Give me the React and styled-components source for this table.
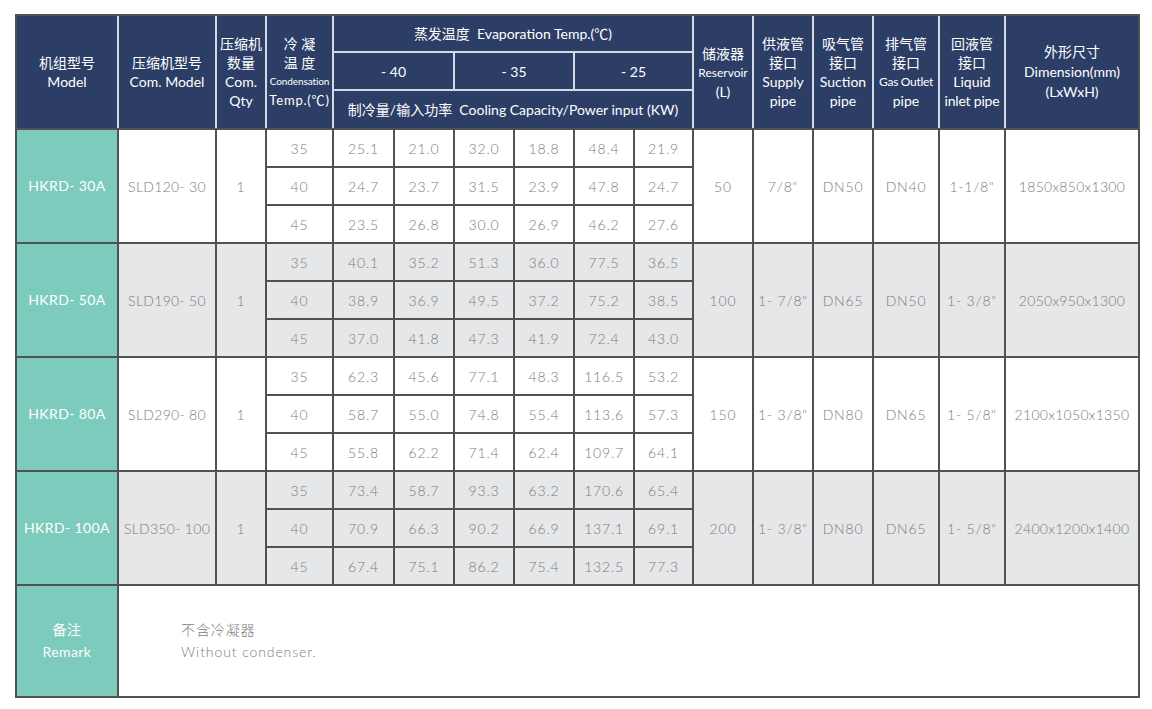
import React from "react";
import styled, { createGlobalStyle } from "styled-components";

const GlobalStyle = createGlobalStyle`
  html, body { margin: 0; padding: 0; background: #ffffff; }
  body { font-family: Lato, "Noto Sans CJK SC", sans-serif; }
  #root { padding: 14px 0 0 15px; }
`;

const COLS = "100px 96px 48px 65px 59px 58px 58px 58px 58px 57px 58px 58px 58px 64px 64px 132px";

const Frame = styled.div`
  display: inline-flex;
  flex-direction: column;
  gap: 2px;
  padding: 2px;
  background: #515151;
`;

const HeadGrid = styled.div`
  display: grid;
  grid-template-columns: ${COLS};
  grid-template-rows: 35px 36px 37px;
  gap: 2px;
  background: #d3d9e2;
`;

const BodyGrid = styled.div`
  display: grid;
  grid-template-columns: ${COLS};
  grid-template-rows: repeat(12, 36px) 110px;
  gap: 2px;
  background: #515151;
`;

const BaseCell = styled.div`
  grid-row: ${(p) => (p.$rows ? `span ${p.$rows}` : "auto")};
  grid-column: ${(p) => (p.$cols ? `span ${p.$cols}` : "auto")};
  display: flex;
  flex-direction: column;
  align-items: center;
  justify-content: center;
  text-align: center;
  font-family: Lato, "Noto Sans CJK SC", sans-serif;
  white-space: nowrap;
`;

const HeadCell = styled(BaseCell)`
  background: #2c3e66;
  color: #ffffff;
  font-size: 14px;
  line-height: 19px;
  font-weight: 400;
`;

const HeadLine = styled.span`
  display: block;
  font-size: ${(p) => p.$size || "14px"};
  letter-spacing: ${(p) => p.$spacing || "0"};
  line-height: ${(p) => p.$lh || "19px"};
`;

const ModelCell = styled(BaseCell)`
  background: #7dcbbc;
  color: #ffffff;
  font-size: 14px;
  line-height: 22px;
  letter-spacing: 0.4px;
`;

const DataCell = styled(BaseCell)`
  background: ${(p) => (p.$shade ? "#e6e7e9" : "#ffffff")};
  color: #7c7c7c;
  font-size: 14px;
  font-weight: 300;
  letter-spacing: ${(p) => (p.$tight ? "0.3px" : "0.8px")};
`;

const RemarkCell = styled(BaseCell)`
  background: #ffffff;
  align-items: flex-start;
  padding-left: 62px;
  color: #7c7c7c;
  font-size: 14px;
  font-weight: 300;
  line-height: 22px;
  letter-spacing: 0.9px;
  text-align: left;
`;

const groups = [
  {
    model: "HKRD- 30A",
    comp: "SLD120- 30",
    qty: "1",
    rows: [
      ["35", "25.1", "21.0", "32.0", "18.8", "48.4", "21.9"],
      ["40", "24.7", "23.7", "31.5", "23.9", "47.8", "24.7"],
      ["45", "23.5", "26.8", "30.0", "26.9", "46.2", "27.6"],
    ],
    res: "50",
    supply: "7/8\"",
    suction: "DN50",
    gas: "DN40",
    liquid: "1-1/8\"",
    dim: "1850x850x1300",
  },
  {
    model: "HKRD- 50A",
    comp: "SLD190- 50",
    qty: "1",
    rows: [
      ["35", "40.1", "35.2", "51.3", "36.0", "77.5", "36.5"],
      ["40", "38.9", "36.9", "49.5", "37.2", "75.2", "38.5"],
      ["45", "37.0", "41.8", "47.3", "41.9", "72.4", "43.0"],
    ],
    res: "100",
    supply: "1- 7/8\"",
    suction: "DN65",
    gas: "DN50",
    liquid: "1- 3/8\"",
    dim: "2050x950x1300",
  },
  {
    model: "HKRD- 80A",
    comp: "SLD290- 80",
    qty: "1",
    rows: [
      ["35", "62.3", "45.6", "77.1", "48.3", "116.5", "53.2"],
      ["40", "58.7", "55.0", "74.8", "55.4", "113.6", "57.3"],
      ["45", "55.8", "62.2", "71.4", "62.4", "109.7", "64.1"],
    ],
    res: "150",
    supply: "1- 3/8\"",
    suction: "DN80",
    gas: "DN65",
    liquid: "1- 5/8\"",
    dim: "2100x1050x1350",
  },
  {
    model: "HKRD- 100A",
    comp: "SLD350- 100",
    qty: "1",
    rows: [
      ["35", "73.4", "58.7", "93.3", "63.2", "170.6", "65.4"],
      ["40", "70.9", "66.3", "90.2", "66.9", "137.1", "69.1"],
      ["45", "67.4", "75.1", "86.2", "75.4", "132.5", "77.3"],
    ],
    res: "200",
    supply: "1- 3/8\"",
    suction: "DN80",
    gas: "DN65",
    liquid: "1- 5/8\"",
    dim: "2400x1200x1400",
  },
];

function Group({ g, shade }) {
  const cells = [];
  g.rows.forEach((row, ri) => {
    if (ri === 0) {
      cells.push(<ModelCell key="m" $rows={3}>{g.model}</ModelCell>);
      cells.push(<DataCell key="c" $rows={3} $shade={shade} $tight>{g.comp}</DataCell>);
      cells.push(<DataCell key="q" $rows={3} $shade={shade}>{g.qty}</DataCell>);
    }
    row.forEach((v, ci) => {
      cells.push(
        <DataCell key={`r${ri}c${ci}`} $shade={shade}>
          {v}
        </DataCell>
      );
    });
    if (ri === 0) {
      [g.res, g.supply, g.suction, g.gas, g.liquid, g.dim].forEach((v, i) => {
        cells.push(
          <DataCell key={`s${i}`} $rows={3} $shade={shade} $tight={i === 5}>
            {v}
          </DataCell>
        );
      });
    }
  });
  return <>{cells}</>;
}

export default function App() {
  return (
    <>
      <GlobalStyle />
      <Frame>
        <HeadGrid>
          <HeadCell $rows={3}>
            <HeadLine>机组型号</HeadLine>
            <HeadLine>Model</HeadLine>
          </HeadCell>
          <HeadCell $rows={3}>
            <HeadLine>压缩机型号</HeadLine>
            <HeadLine>Com. Model</HeadLine>
          </HeadCell>
          <HeadCell $rows={3}>
            <HeadLine>压缩机</HeadLine>
            <HeadLine>数量</HeadLine>
            <HeadLine>Com.</HeadLine>
            <HeadLine>Qty</HeadLine>
          </HeadCell>
          <HeadCell $rows={3}>
            <HeadLine>冷 凝</HeadLine>
            <HeadLine>温 度</HeadLine>
            <HeadLine $size="10px" $spacing="-0.1px">Condensation</HeadLine>
            <HeadLine $size="13px" $spacing="0.8px">Temp.(℃)</HeadLine>
          </HeadCell>
          <HeadCell $cols={6}>
            <HeadLine>蒸发温度&nbsp;&nbsp;Evaporation Temp.(℃)</HeadLine>
          </HeadCell>
          <HeadCell $rows={3}>
            <HeadLine>储液器</HeadLine>
            <HeadLine $size="12px">Reservoir</HeadLine>
            <HeadLine>(L)</HeadLine>
          </HeadCell>
          <HeadCell $rows={3}>
            <HeadLine>供液管</HeadLine>
            <HeadLine>接口</HeadLine>
            <HeadLine>Supply</HeadLine>
            <HeadLine>pipe</HeadLine>
          </HeadCell>
          <HeadCell $rows={3}>
            <HeadLine>吸气管</HeadLine>
            <HeadLine>接口</HeadLine>
            <HeadLine>Suction</HeadLine>
            <HeadLine>pipe</HeadLine>
          </HeadCell>
          <HeadCell $rows={3}>
            <HeadLine>排气管</HeadLine>
            <HeadLine>接口</HeadLine>
            <HeadLine $size="12px" $spacing="-0.3px">Gas Outlet</HeadLine>
            <HeadLine>pipe</HeadLine>
          </HeadCell>
          <HeadCell $rows={3}>
            <HeadLine>回液管</HeadLine>
            <HeadLine>接口</HeadLine>
            <HeadLine>Liquid</HeadLine>
            <HeadLine $spacing="-0.2px">inlet pipe</HeadLine>
          </HeadCell>
          <HeadCell $rows={3}>
            <HeadLine $lh="20px">外形尺寸</HeadLine>
            <HeadLine $lh="20px">Dimension(mm)</HeadLine>
            <HeadLine $lh="20px">(LxWxH)</HeadLine>
          </HeadCell>
          <HeadCell $cols={2}>- 40</HeadCell>
          <HeadCell $cols={2}>- 35</HeadCell>
          <HeadCell $cols={2}>- 25</HeadCell>
          <HeadCell $cols={6}>
            <HeadLine>制冷量/输入功率&nbsp;&nbsp;Cooling Capacity/Power input (KW)</HeadLine>
          </HeadCell>
        </HeadGrid>
        <BodyGrid>
          {groups.map((g, i) => (
            <Group key={g.model} g={g} shade={i % 2 === 1} />
          ))}
          <ModelCell>
            <span>备注</span>
            <span>Remark</span>
          </ModelCell>
          <RemarkCell $cols={15}>
            <span>不含冷凝器</span>
            <span>Without condenser.</span>
          </RemarkCell>
        </BodyGrid>
      </Frame>
    </>
  );
}
